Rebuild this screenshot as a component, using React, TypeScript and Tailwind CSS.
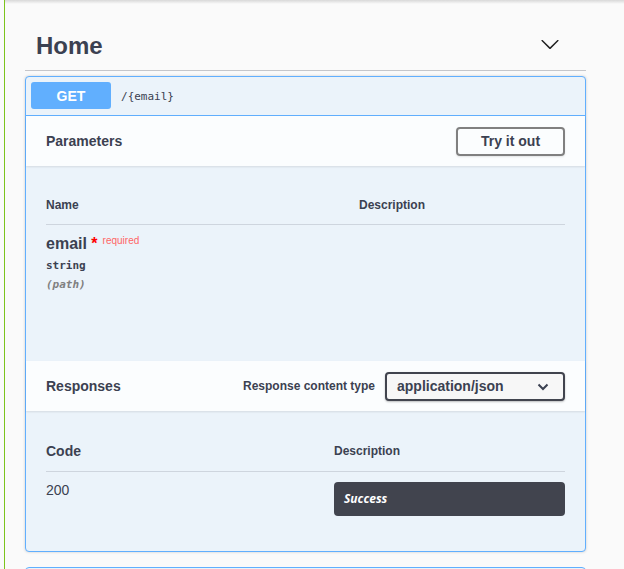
export default function App() {
  return (
    <div className="h-[569px] overflow-hidden bg-[#fafafa] pl-[4px] font-['Liberation_Sans',Arial,sans-serif] text-[#3b4151]">
      <div className="relative h-[569px] border-l border-[#7cc41c]">
        <div className="absolute left-0 right-0 top-0 h-[4px] bg-linear-to-b from-[#d8d8d8] to-[#fafafa]" />
        <div className="ml-[20px] w-[561px] pt-[20px]">
          {/* Tag heading */}
          <div className="flex h-[51px] items-center border-b border-[#c5c6ca] pl-[11px] pr-[26px]">
            <span className="flex-1 pt-[2px] text-[24px] font-bold leading-[30px]">Home</span>
            <svg width="20" height="20" viewBox="0 0 20 20" className="mt-[-3px] fill-[#1f1f1f]">
              <path d="M17.418 6.109c.272-.268.709-.268.979 0s.271.701 0 .969l-7.908 7.83c-.27.268-.707.268-.979 0l-7.908-7.83c-.27-.268-.27-.701 0-.969.271-.268.709-.268.979 0L10 13.25l7.418-7.141z" />
            </svg>
          </div>

          {/* Opblock */}
          <div className="mt-[5px] rounded-[4px] border border-[#61affe] bg-[#ebf3fa] shadow-[0_0_3px_rgba(0,0,0,0.19)]">
            <div className="flex items-center border-b border-[#61affe] px-[5px] pb-[6px] pt-[5px]">
              <div className="flex h-[27px] w-[80px] items-center justify-center rounded-[3px] bg-[#61affe] pt-[1px] text-[14px] font-bold text-white">
                GET
              </div>
              <span className="ml-[10px] pt-[3px] font-['DejaVu_Sans_Mono',monospace] text-[11px] text-[#3b4151]">/{"{email}"}</span>
            </div>

            {/* Parameters header */}
            <div className="flex h-[50px] items-center justify-between bg-white/80 px-[20px] shadow-[0_1px_2px_rgba(0,0,0,0.1)]">
              <span className="text-[14px] font-bold">Parameters</span>
              <button className="h-[29px] w-[109px] rounded-[4px] border-2 border-[#808080] bg-transparent text-[14px] font-bold text-[#3b4151] shadow-[0_1px_2px_rgba(0,0,0,0.1)]">
                Try it out
              </button>
            </div>

            {/* Parameters body */}
            <div className="h-[195px] px-[20px] pt-[20px]">
              <div className="grid grid-cols-[313px_1fr] border-b border-[#ced5de] py-[12px] text-[12px] font-bold leading-[14px]">
                <span>Name</span>
                <span>Description</span>
              </div>
              <div className="pt-[10px]">
                <div className="text-[16px] font-bold leading-[18px]">
                  email
                  <span className="text-[#ff0000]">&nbsp;*</span>
                  <span className="relative top-[-5px] pl-[5px] text-[10px] font-normal text-[#ff6666]">required</span>
                </div>
                <div className="pt-[1px] font-['DejaVu_Sans_Mono',monospace] text-[11px] font-semibold leading-[19px]">string</div>
                <div className="font-['DejaVu_Sans_Mono',monospace] text-[11px] font-semibold italic leading-[19px] text-[#808080]">(path)</div>
              </div>
            </div>

            {/* Responses header */}
            <div className="flex h-[50px] items-center bg-white/80 px-[20px] shadow-[0_1px_2px_rgba(0,0,0,0.1)]">
              <span className="flex-1 text-[14px] font-bold">Responses</span>
              <span className="mr-[10px] text-[12px] font-bold">Response content type</span>
              <div className="flex h-[29px] w-[180px] items-center justify-between rounded-[4px] border-2 border-[#41444e] bg-[#f7f7f7] pl-[10px] pr-[14px] shadow-[0_1px_2px_rgba(0,0,0,0.25)]">
                <span className="text-[14px] font-bold">application/json</span>
                <svg width="12" height="8" viewBox="0 0 12 8" className="mt-[1px]">
                  <path d="M1.5 1.5L6 6l4.5-4.5" fill="none" stroke="#3b4151" strokeWidth="2" />
                </svg>
              </div>
            </div>

            {/* Responses body */}
            <div className="px-[20px] pb-[35px] pt-[20px]">
              <div className="grid grid-cols-[288px_1fr] items-center border-b border-[#ced5de] py-[12px]">
                <span className="text-[14px] font-bold leading-[16px]">Code</span>
                <span className="text-[12px] font-bold leading-[14px]">Description</span>
              </div>
              <div className="grid grid-cols-[288px_1fr] pt-[10px]">
                <span className="text-[14px] leading-[16px]">200</span>
                <div className="flex h-[34px] items-center rounded-[4px] bg-[#41444e] px-[10px]">
                  <span className="font-['Open_Sans',sans-serif] text-[12px] font-bold italic text-white">Success</span>
                </div>
              </div>
            </div>
          </div>

          {/* Next opblock (partially visible) */}
          <div className="mt-[15px] h-[20px] rounded-[4px] border border-[#61affe] bg-[#ebf3fa]" />
        </div>
      </div>
    </div>
  );
}
